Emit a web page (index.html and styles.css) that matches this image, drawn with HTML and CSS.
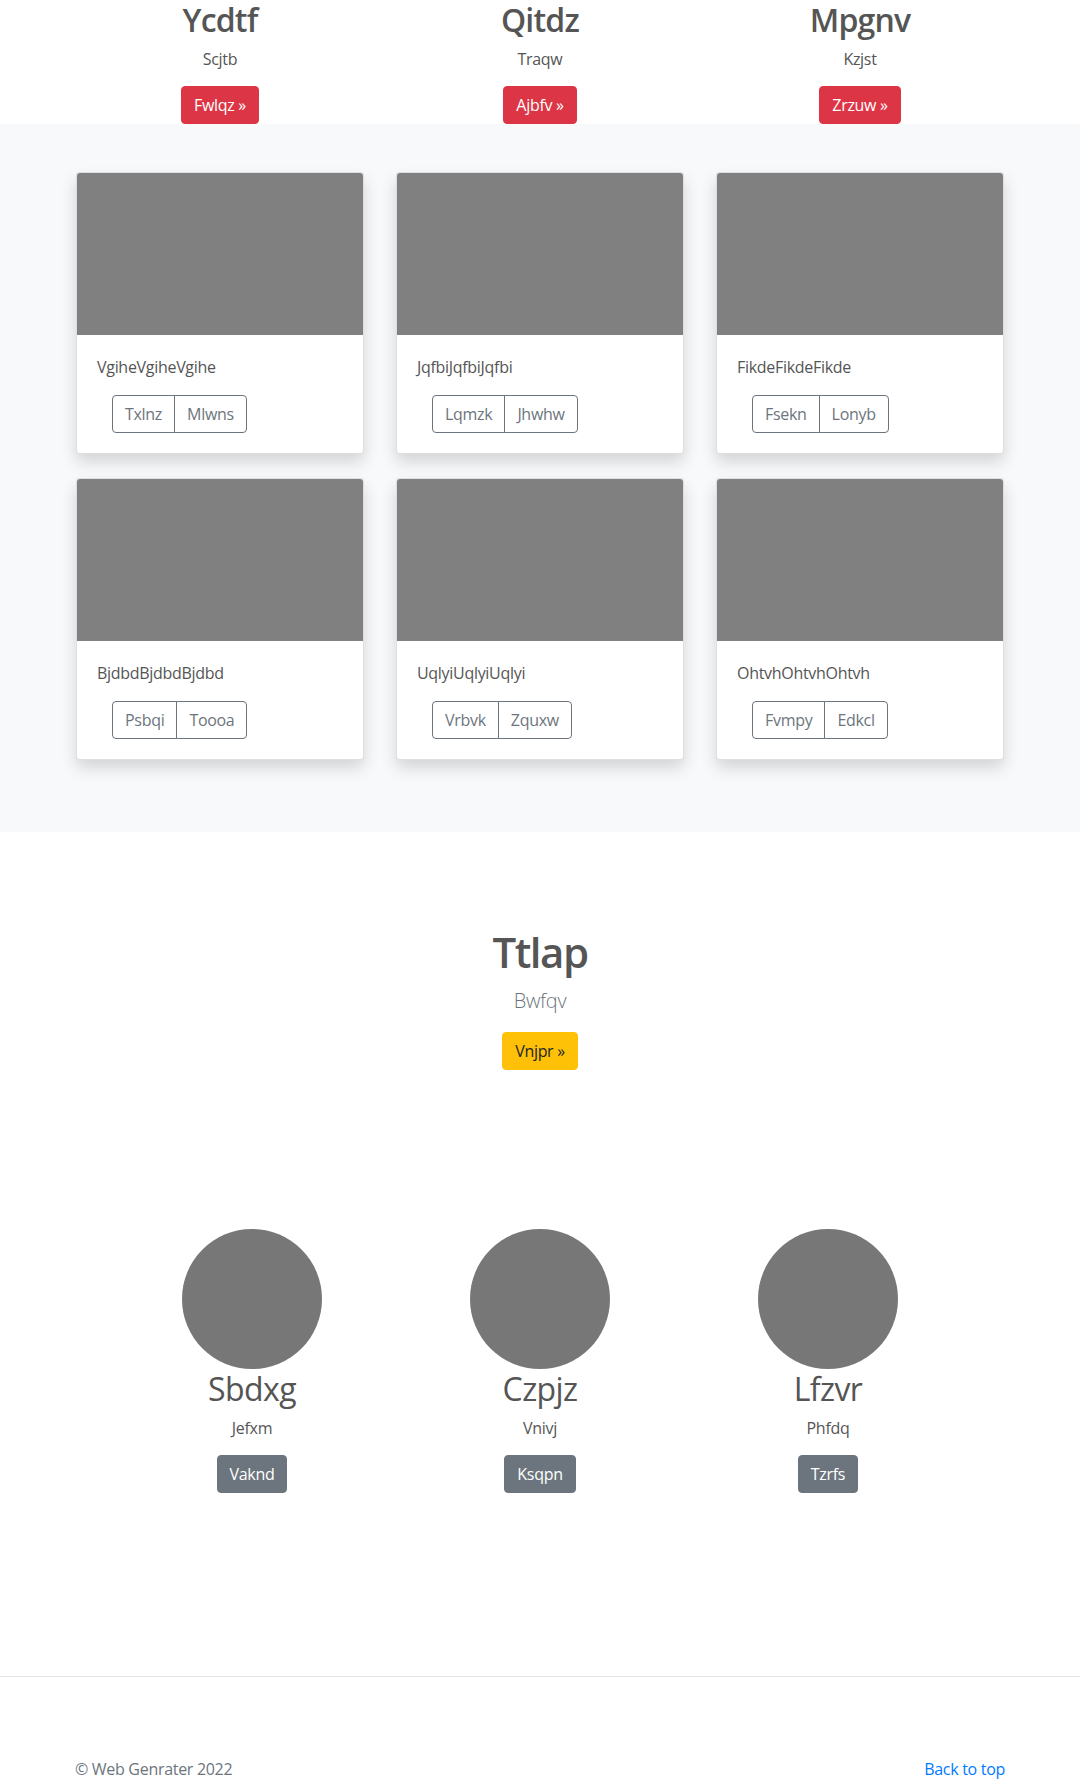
FILE: index.html
```html
<!DOCTYPE html>
<html lang="en">
<head>
<meta charset="utf-8">
<title>Page</title>
<link rel="stylesheet" href="styles.css">
</head>
<body>
<section class="intro">
  <div class="grid3">
    <div class="intro-col">
      <h2 class="intro-title">Ycdtf</h2>
      <p class="intro-text">Scjtb</p>
      <a class="btn btn-danger" href="#">Fwlqz &raquo;</a>
    </div>
    <div class="intro-col">
      <h2 class="intro-title">Qitdz</h2>
      <p class="intro-text">Traqw</p>
      <a class="btn btn-danger" href="#">Ajbfv &raquo;</a>
    </div>
    <div class="intro-col">
      <h2 class="intro-title">Mpgnv</h2>
      <p class="intro-text">Kzjst</p>
      <a class="btn btn-danger" href="#">Zrzuw &raquo;</a>
    </div>
  </div>
</section>

<section class="album">
  <div class="grid3 cards">
    <div class="card">
      <div class="card-img"></div>
      <div class="card-body">
        <p class="card-text">VgiheVgiheVgihe</p>
        <div class="btn-group"><button class="btn btn-outline">Txlnz</button><button class="btn btn-outline">Mlwns</button></div>
      </div>
    </div>
    <div class="card">
      <div class="card-img"></div>
      <div class="card-body">
        <p class="card-text">JqfbiJqfbiJqfbi</p>
        <div class="btn-group"><button class="btn btn-outline">Lqmzk</button><button class="btn btn-outline">Jhwhw</button></div>
      </div>
    </div>
    <div class="card">
      <div class="card-img"></div>
      <div class="card-body">
        <p class="card-text">FikdeFikdeFikde</p>
        <div class="btn-group"><button class="btn btn-outline">Fsekn</button><button class="btn btn-outline">Lonyb</button></div>
      </div>
    </div>
    <div class="card">
      <div class="card-img"></div>
      <div class="card-body">
        <p class="card-text">BjdbdBjdbdBjdbd</p>
        <div class="btn-group"><button class="btn btn-outline">Psbqi</button><button class="btn btn-outline">Toooa</button></div>
      </div>
    </div>
    <div class="card">
      <div class="card-img"></div>
      <div class="card-body">
        <p class="card-text">UqlyiUqlyiUqlyi</p>
        <div class="btn-group"><button class="btn btn-outline">Vrbvk</button><button class="btn btn-outline">Zquxw</button></div>
      </div>
    </div>
    <div class="card">
      <div class="card-img"></div>
      <div class="card-body">
        <p class="card-text">OhtvhOhtvhOhtvh</p>
        <div class="btn-group"><button class="btn btn-outline">Fvmpy</button><button class="btn btn-outline">Edkcl</button></div>
      </div>
    </div>
  </div>
</section>

<section class="hero">
  <h1 class="hero-title">Ttlap</h1>
  <p class="lead">Bwfqv</p>
  <p class="hero-action"><a class="btn btn-warning" href="#">Vnjpr &raquo;</a></p>
</section>

<section class="marketing">
  <div class="grid-market">
    <div class="market-col">
      <div class="circle"></div>
      <h2 class="market-title">Sbdxg</h2>
      <p class="market-text">Jefxm</p>
      <p class="market-action"><a class="btn btn-secondary" href="#">Vaknd</a></p>
    </div>
    <div class="market-col">
      <div class="circle"></div>
      <h2 class="market-title">Czpjz</h2>
      <p class="market-text">Vnivj</p>
      <p class="market-action"><a class="btn btn-secondary" href="#">Ksqpn</a></p>
    </div>
    <div class="market-col">
      <div class="circle"></div>
      <h2 class="market-title">Lfzvr</h2>
      <p class="market-text">Phfdq</p>
      <p class="market-action"><a class="btn btn-secondary" href="#">Tzrfs</a></p>
    </div>
  </div>
</section>

<footer class="footer">
  <div class="footer-inner">
    <p class="copy">&copy; Web Genrater 2022</p>
    <p class="totop"><a href="#">Back to top</a></p>
  </div>
</footer>
</body>
</html>
```

FILE: styles.css
```css
* { box-sizing: border-box; }
html, body { margin: 0; padding: 0; }
body {
  font-family: "Open Sans", "Liberation Sans", sans-serif;
  font-size: 16px;
  line-height: 1.5;
  letter-spacing: -0.3px;
  color: #555;
  background: #fff;
}
p { margin: 0 0 16px; }
a { color: #007bff; text-decoration: none; }

.grid3 {
  width: 928px;
  margin: 0 auto;
  display: grid;
  grid-template-columns: repeat(3, 288px);
  column-gap: 32px;
}

/* intro */
.intro { padding-top: 1px; }
.intro-col { text-align: center; }
.intro-title {
  margin: 0 0 8px;
  font-size: 32px;
  line-height: 1.2;
  font-weight: 600;
  letter-spacing: -0.8px;
  color: #555;
}
.intro-text { margin-bottom: 15px; }

/* buttons */
.btn {
  display: inline-block;
  font-family: inherit;
  font-size: 16px;
  line-height: 1.5;
  letter-spacing: -0.3px;
  padding: 6px 12px;
  border: 1px solid transparent;
  border-radius: 4px;
  cursor: pointer;
  font-weight: 400;
}
.btn-danger { background: #dc3545; border-color: #dc3545; color: #fff; }
.btn-warning { background: #ffc107; border-color: #ffc107; color: #212529; }
.btn-secondary { background: #6c757d; border-color: #6c757d; color: #fff; }
.btn-outline { background: transparent; border-color: #6c757d; color: #6c757d; }

.btn-group { display: inline-flex; margin-left: 15px; }
.btn-group .btn { border-radius: 0; }
.btn-group .btn + .btn { margin-left: -1px; }
.btn-group .btn:first-child { border-radius: 4px 0 0 4px; }
.btn-group .btn:last-child { border-radius: 0 4px 4px 0; }

/* album */
.album {
  background: #f8f9fa;
  padding: 48px 0 72px;
}
.cards { row-gap: 24px; }
.card {
  background: #fff;
  border: 1px solid rgba(0,0,0,.125);
  border-radius: 4px;
  overflow: hidden;
  box-shadow: 0 8px 16px rgba(0,0,0,.15);
}
.card-img { height: 162px; background: #808080; }
.card-body { padding: 20px; }
.card-text { margin-bottom: 16px; }

/* hero */
.hero {
  text-align: center;
  padding: 95px 0 94px;
}
.hero-title {
  margin: 0 0 8px;
  font-size: 42px;
  line-height: 1.2;
  font-weight: 600;
  letter-spacing: -1.5px;
  color: #555;
}
.lead {
  font-size: 20px;
  font-weight: 300;
  color: #6c757d;
  margin-bottom: 16px;
}
.hero-action { margin-bottom: 16px; }

/* marketing */
.marketing { padding: 49px 0 167px; }
.grid-market {
  width: 864px;
  margin: 0 auto;
  display: grid;
  grid-template-columns: repeat(3, 288px);
}
.market-col { text-align: center; }
.circle {
  width: 140px;
  height: 140px;
  border-radius: 50%;
  background: #777;
  margin: 0 auto;
}
.market-title {
  margin: 0 0 8px;
  padding-top: 1px;
  font-size: 32px;
  line-height: 1.2;
  font-weight: 400;
  letter-spacing: -0.6px;
  color: #555;
}
.market-text { margin-bottom: 15px; }
.market-action { margin-bottom: 16px; }

/* footer */
.footer {
  border-top: 1px solid #e5e5e5;
  padding: 80px 0 48px;
  color: #6c757d;
}
.footer-inner {
  width: 930px;
  margin: 0 auto;
  display: flex;
  justify-content: space-between;
}
.footer p { margin: 0; }
```
